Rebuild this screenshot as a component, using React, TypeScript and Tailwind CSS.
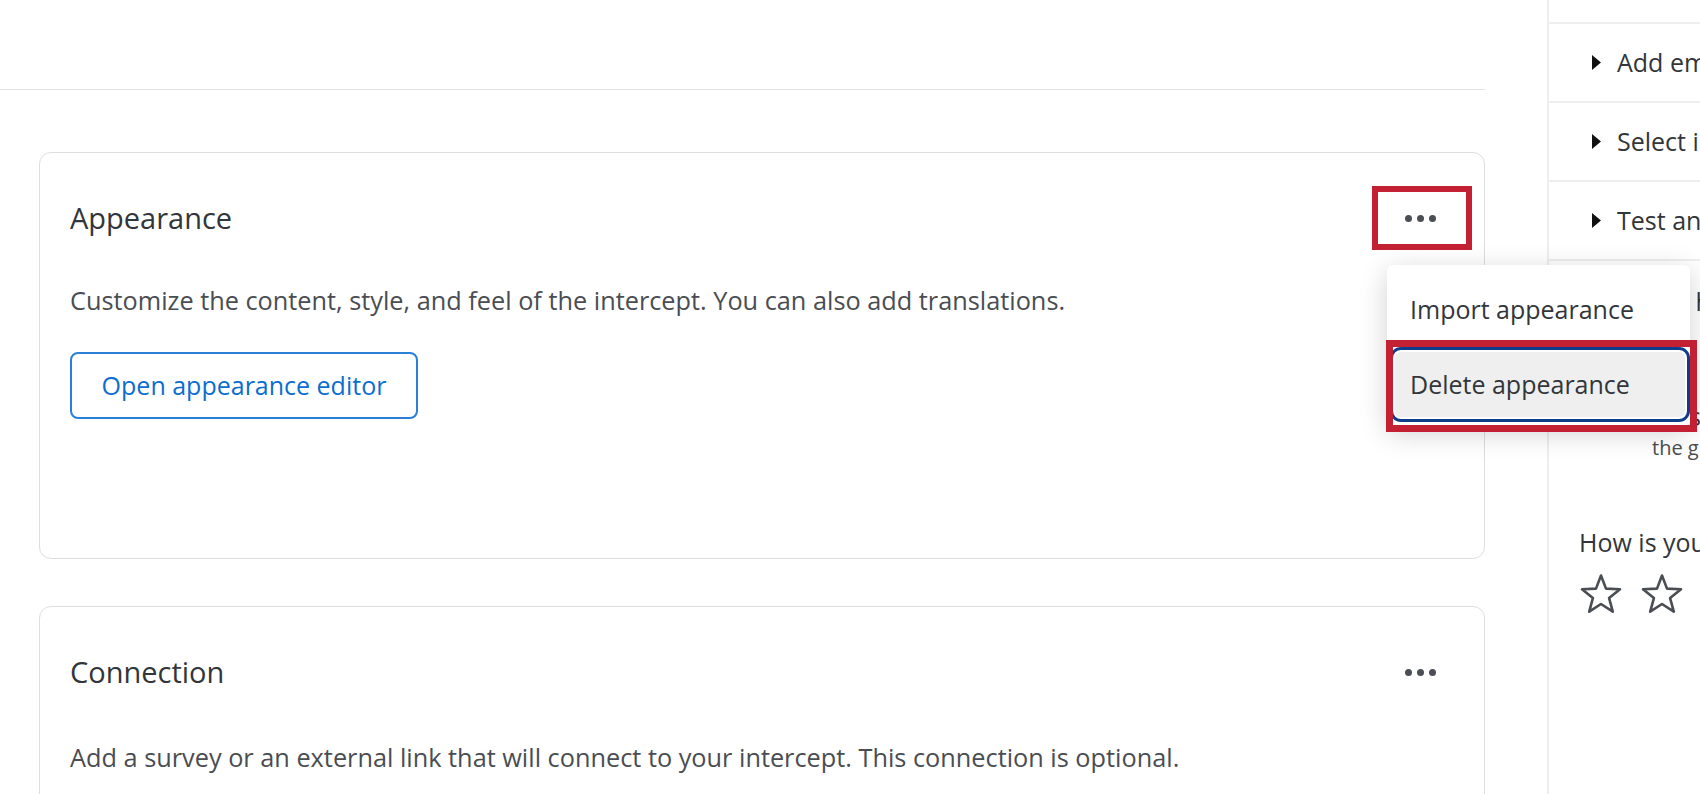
const Dots = () => (
    <div className="flex items-center gap-[5px]">
        <span className="w-[7px] h-[7px] rounded-full bg-[#4b4e54]" />
        <span className="w-[7px] h-[7px] rounded-full bg-[#4b4e54]" />
        <span className="w-[7px] h-[7px] rounded-full bg-[#4b4e54]" />
    </div>
);

const Caret = () => (
    <svg width="9" height="15" viewBox="0 0 9 15" className="shrink-0">
        <path d="M0 0 L9 7.5 L0 15 Z" fill="#111" />
    </svg>
);

const StarOutline = () => (
    <svg width="44" height="42" viewBox="-1.5 -1.5 44 42" className="shrink-0">
        <path
            d="M20.5 1 L25.5 14.1 L39.5 14.8 L28.6 23.6 L32.3 37.2 L20.5 29.5 L8.7 37.2 L12.4 23.6 L1.5 14.8 L15.5 14.1 Z"
            fill="none"
            stroke="#4a4d52"
            strokeWidth="2.6"
            strokeLinejoin="round"
        />
    </svg>
);

const SideItem = ({ label }: { label: string }) => (
    <div className="h-[79px] flex items-center gap-[16px] pl-[43px] border-b-2 border-[#eeeeee] whitespace-nowrap">
        <Caret />
        <span className="text-[25px] text-[#32363a]">{label}</span>
    </div>
);

const App = () => {
    return (
        <div
            className="relative w-[1700px] h-[794px] overflow-hidden bg-white flex"
            style={{ fontFamily: '"Open Sans", "Noto Sans", sans-serif' }}
        >
            {/* main column */}
            <div className="w-[1547px] shrink-0 pr-[62px]">
                <div className="h-[90px] border-b border-[#e3e3e3]" />
                <div className="pl-[39px] pt-[62px] flex flex-col gap-[47px]">
                    {/* Appearance card */}
                    <div className="h-[407px] border border-[#dedede] rounded-[12px] px-[30px] pt-[45px]">
                        <div className="flex items-center justify-between h-[40px]">
                            <h2 className="text-[29px] text-[#32363a] leading-[40px]">Appearance</h2>
                            <div className="w-[40px] h-[40px] flex items-center justify-center mr-[14px]">
                                <Dots />
                            </div>
                        </div>
                        <p className="mt-[45px] text-[25.3px] leading-[34px] text-[#4a4d52]">
                            Customize the content, style, and feel of the intercept. You can also add translations.
                        </p>
                        <button className="mt-[35px] w-[348px] h-[67px] border-2 border-[#2a7fd9] rounded-[8px] text-[25px] text-[#0b6ed0]">
                            Open appearance editor
                        </button>
                    </div>

                    {/* Connection card */}
                    <div className="h-[400px] border border-[#dedede] rounded-[12px] px-[30px] pt-[45px]">
                        <div className="flex items-center justify-between h-[40px]">
                            <h2 className="text-[29px] text-[#32363a] leading-[40px]">Connection</h2>
                            <div className="w-[40px] h-[40px] flex items-center justify-center mr-[14px]">
                                <Dots />
                            </div>
                        </div>
                        <p className="mt-[48px] text-[25.3px] leading-[34px] text-[#4a4d52]">
                            Add a survey or an external link that will connect to your intercept. This connection is optional.
                        </p>
                    </div>
                </div>
            </div>

            {/* right sidebar */}
            <div className="flex-1 border-l-2 border-[#eeeeee] overflow-hidden">
                <div className="h-[24px] border-b-2 border-[#eeeeee]" />
                <SideItem label="Add embed code" />
                <SideItem label="Select implementation" />
                <SideItem label="Test and publish" />
                <div className="pl-[30px] whitespace-nowrap">
                    <p className="mt-[22px] text-[25px] leading-[36px] text-[#32363a]">Get more help</p>
                    <p className="mt-[80px] text-[25px] leading-[34px] text-[#32363a]">Read the support page</p>
                    <p className="pl-[73px] text-[20px] leading-[30px] text-[#4a4d52]">the guide</p>
                    <p className="mt-[62px] text-[25px] leading-[34px] text-[#32363a]">How is your experience?</p>
                    <div className="mt-[14px] flex gap-[17px]">
                        <StarOutline />
                        <StarOutline />
                        <StarOutline />
                    </div>
                </div>
            </div>

            {/* dropdown menu */}
            <div className="absolute left-[1387px] top-[265px] w-[303px] bg-white rounded-[6px] shadow-[0_6px_28px_rgba(0,0,0,0.18)] pt-[8px] pb-[10px] pl-[8px] pr-[5px]">
                <div className="h-[73px] flex items-center pl-[15px] text-[25px] text-[#32363a]">Import appearance</div>
                <div className="mt-[6px] h-[65px] flex items-center pl-[15px] text-[25px] text-[#32363a] bg-[#efefef] rounded-[6px] outline-[3px] outline-[#0e3d8c] outline-offset-[2px]">
                    Delete appearance
                </div>
            </div>

            {/* annotation boxes */}
            <div className="absolute left-[1372px] top-[186px] w-[100px] h-[64px] border-[6px] border-[#c32033]" />
            <div className="absolute left-[1386px] top-[340px] w-[311px] h-[92px] border-[7px] border-[#c32033]" />
        </div>
    );
};

export default App;
